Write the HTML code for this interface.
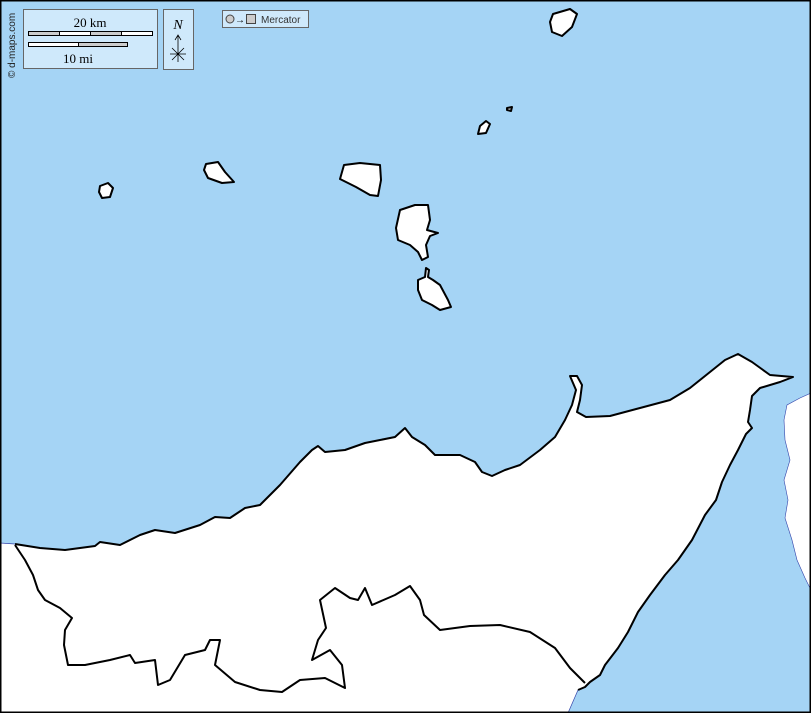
<!DOCTYPE html>
<html><head><meta charset="utf-8"><style>
html,body{margin:0;padding:0;background:#a5d4f5;}
svg{display:block}
</style></head><body>
<svg width="811" height="713" viewBox="0 0 811 713" xmlns="http://www.w3.org/2000/svg">
<rect x="0" y="0" width="811" height="713" fill="#a5d4f5"/>
<!-- right land -->
<path d="M811,393 L800,398 L787,405 L784,420 L785,440 L790,460 L784,480 L788,500 L785,518 L792,540 L797,560 L805,578 L811,590 Z" fill="#fff" stroke="#3344aa" stroke-width="0.6"/>
<!-- main land -->
<path d="M0,543 L15,544 L40,548 L65,550 L95,546 L100,542 L120,545 L140,535 L155,530 L175,533 L200,525 L215,517 L230,518 L245,508 L260,505 L280,485 L300,462 L312,450 L318,446 L325,452 L345,450 L365,443 L380,440 L395,437 L405,428 L412,437 L425,445 L435,455 L460,455 L475,462 L482,472 L492,476 L505,470 L520,465 L540,450 L555,437 L565,420 L572,405 L576,390 L570,376 L577,376 L582,385 L580,400 L577,412 L586,417 L610,416 L640,408 L670,400 L690,388 L710,372 L725,360 L738,354 L752,362 L770,375 L793,377 L780,382 L760,388 L752,396 L750,410 L748,422 L752,428 L746,434 L738,450 L730,465 L722,482 L716,500 L705,515 L692,540 L678,560 L665,575 L650,595 L638,612 L628,632 L618,648 L605,665 L600,675 L590,682 L585,687 L578,690 L568,713 L0,713 Z" fill="#fff"/>
<path d="M15,544 L40,548 L65,550 L95,546 L100,542 L120,545 L140,535 L155,530 L175,533 L200,525 L215,517 L230,518 L245,508 L260,505 L280,485 L300,462 L312,450 L318,446 L325,452 L345,450 L365,443 L380,440 L395,437 L405,428 L412,437 L425,445 L435,455 L460,455 L475,462 L482,472 L492,476 L505,470 L520,465 L540,450 L555,437 L565,420 L572,405 L576,390 L570,376 L577,376 L582,385 L580,400 L577,412 L586,417 L610,416 L640,408 L670,400 L690,388 L710,372 L725,360 L738,354 L752,362 L770,375 L793,377 L780,382 L760,388 L752,396 L750,410 L748,422 L752,428 L746,434 L738,450 L730,465 L722,482 L716,500 L705,515 L692,540 L678,560 L665,575 L650,595 L638,612 L628,632 L618,648 L605,665 L600,675 L590,682 L585,687 L578,690" fill="none" stroke="#000" stroke-width="2" stroke-linejoin="round"/>
<path d="M578,690 L568,713 M0,543 L15,544" fill="none" stroke="#3344aa" stroke-width="0.7"/>
<!-- internal border -->
<path d="M15,545 L25,560 L33,575 L38,590 L45,600 L60,608 L72,618 L65,630 L64,645 L68,665 L85,665 L110,660 L130,655 L135,663 L155,660 L158,685 L170,680 L185,655 L205,650 L210,640 L220,640 L215,665 L235,682 L260,690 L282,692 L300,680 L325,678 L345,688 L342,665 L330,650 L312,660 L318,640 L326,628 L320,600 L335,588 L350,598 L358,600 L365,588 L372,605 L395,595 L410,586 L420,600 L424,615 L440,630 L470,626 L500,625 L530,632 L555,648 L570,668 L585,683" fill="none" stroke="#000" stroke-width="2" stroke-linejoin="round"/>
<!-- islands -->
<g fill="#fff" stroke="#000" stroke-width="2" stroke-linejoin="round">
<path d="M553,14 L570,9 L577,14 L572,27 L562,36 L552,32 L550,22 Z"/>
<path d="M507,108 L512,107 L511,111 L507,110 Z"/>
<path d="M480,126 L486,121 L490,124 L486,133 L478,134 Z"/>
<path d="M206,164 L218,162 L225,172 L234,182 L222,183 L208,178 L204,170 Z"/>
<path d="M100,186 L108,183 L113,188 L110,197 L102,198 L99,192 Z"/>
<path d="M344,165 L360,163 L380,165 L381,180 L378,196 L370,195 L356,187 L340,179 Z"/>
<path d="M400,210 L415,205 L428,205 L430,220 L427,230 L438,233 L430,236 L426,245 L428,257 L422,260 L418,252 L410,245 L398,240 L396,228 Z"/>
<path d="M426,268 L429,270 L428,277 L433,280 L440,285 L448,300 L451,307 L440,310 L432,305 L422,300 L418,290 L418,280 L425,277 Z"/>
</g>
<!-- frame -->
<rect x="0.5" y="0.5" width="810" height="712" fill="none" stroke="#000" stroke-width="2"/>
<!-- legend -->
<text transform="translate(15,78) rotate(-90)" font-family="Liberation Sans, sans-serif" font-size="10" fill="#222">© d-maps.com</text>
<rect x="23.5" y="9.5" width="134" height="59" fill="#cfe9fb" stroke="#666" stroke-width="1"/>
<text x="90" y="27" text-anchor="middle" font-family="Liberation Serif, serif" font-size="13">20 km</text>
<rect x="28.5" y="31.5" width="124" height="4" fill="#fff" stroke="#000" stroke-width="1"/>
<rect x="28.5" y="31.5" width="31" height="4" fill="#ccc" stroke="#000" stroke-width="1"/>
<rect x="90.5" y="31.5" width="31" height="4" fill="#ccc" stroke="#000" stroke-width="1"/>
<line x1="59.5" y1="31" x2="59.5" y2="36" stroke="#000"/>
<line x1="121.5" y1="31" x2="121.5" y2="36" stroke="#000"/>
<rect x="28.5" y="42.5" width="50" height="4" fill="#fff" stroke="#000" stroke-width="1"/>
<rect x="78.5" y="42.5" width="49" height="4" fill="#ccc" stroke="#000" stroke-width="1"/>
<text x="78" y="63" text-anchor="middle" font-family="Liberation Serif, serif" font-size="13">10 mi</text>
<rect x="163.5" y="9.5" width="30" height="60" fill="#cfe9fb" stroke="#666" stroke-width="1"/>
<text x="178" y="29" text-anchor="middle" font-family="Liberation Serif, serif" font-style="italic" font-size="14">N</text>
<path d="M178,62 L178,36 M175,40 L178,35 L181,40 M170,54 L186,54 M172,48 L184,60 M184,48 L172,60" stroke="#000" stroke-width="0.8" fill="none"/>
<rect x="222.5" y="10.5" width="86" height="17" fill="#cfe9fb" stroke="#666" stroke-width="1"/>
<circle cx="230" cy="19" r="4" fill="#ccc" stroke="#444"/>
<text x="235" y="23" font-family="Liberation Sans, sans-serif" font-size="10">→</text>
<rect x="246.5" y="14.5" width="9" height="9" fill="#ccc" stroke="#444"/>
<text x="261" y="23" font-family="Liberation Sans, sans-serif" font-size="10" fill="#333">Mercator</text>
</svg>
</body></html>
